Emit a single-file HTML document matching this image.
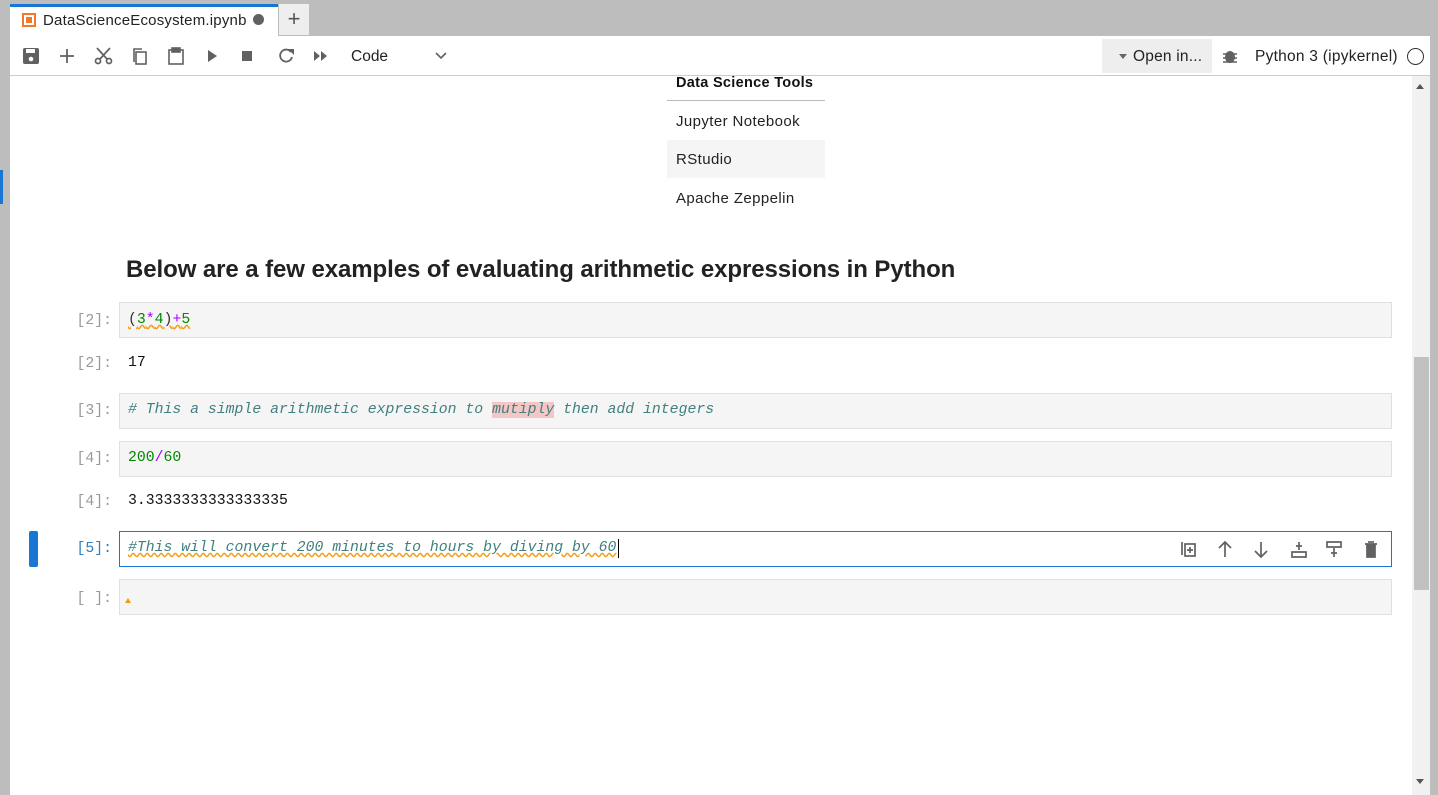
<!DOCTYPE html>
<html><head><style>
*{margin:0;padding:0;box-sizing:border-box}
body{width:1438px;height:795px;background:#bdbdbd;position:relative;overflow:hidden;font-family:"Liberation Sans",sans-serif}
.abs{position:absolute}
.mono{font-family:"Liberation Mono","DejaVu Sans Mono",monospace;font-size:14.8px}
.prompt{position:absolute;left:40px;width:72px;text-align:right;color:#999}
.cell{position:absolute;left:119px;width:1273px;height:36px;background:#f5f5f5;border:1px solid #e0e0e0}
.txt{position:absolute;left:128px;white-space:pre}
.tt{font-size:15px;letter-spacing:0.4px;color:#222}
</style></head><body>
<div class="abs" style="left:10px;top:4px;width:268px;height:32px;background:#fff;border-top:3px solid #1976d2"></div>
<div class="abs" style="left:22px;top:13px;width:14px;height:14px;border:2px solid #f37726;background:#fff"><div style="margin:2px;width:6px;height:6px;background:#f37726"></div></div>
<div class="abs" style="left:43px;top:12px;font-size:15px;letter-spacing:0.2px;color:#222">DataScienceEcosystem.ipynb</div>
<div class="abs" style="left:253px;top:14px;width:11px;height:11px;border-radius:50%;background:#616161"></div>
<div class="abs" style="left:279px;top:4px;width:30px;height:31px;background:#eee;font-size:22px;color:#555;text-align:center;line-height:29px">+</div>
<div class="abs" style="left:10px;top:36px;width:1420px;height:759px;background:#fff"></div>
<div class="abs" style="left:10px;top:75px;width:1420px;height:1px;background:#ccc"></div>
<svg class="abs" style="left:10px;top:36px" width="450" height="40" fill="#616161">
<rect x="13" y="12" width="16" height="16" rx="2"/><rect x="16" y="13" width="9" height="4" fill="#fff"/><circle cx="21" cy="23" r="2.3" fill="#fff"/>
<path d="M57 13v14M50 20h14" stroke="#616161" stroke-width="1.8"/>
<g stroke="#616161" stroke-width="1.7" fill="none"><circle cx="88" cy="25" r="2.5"/><circle cx="99" cy="25" r="2.5"/><path d="M90 23L100 12M97 23L87 12"/></g>
<g stroke="#616161" stroke-width="1.6" fill="none"><path d="M124 26V13h8"/><rect x="126" y="16" width="10" height="12"/></g>
<g stroke="#616161" stroke-width="1.6" fill="none"><rect x="159" y="14" width="14" height="14"/><rect x="162" y="12" width="8" height="4" fill="#616161"/></g>
<path d="M198 14v12l9-6z"/>
<rect x="232" y="15" width="10" height="10"/>
<path d="M281 16a6 6 0 1 0 1 5" stroke="#616161" stroke-width="1.8" fill="none"/><path d="M278 13h6v6z"/>
<path d="M304 15v10l6-5zM311 15v10l6-5z"/>
<path d="M426 17l5 5 5-5" stroke="#616161" stroke-width="1.6" fill="none"/>
</svg>
<div class="abs" style="left:351px;top:48px;font-size:15.5px;color:#222">Code</div>
<div class="abs" style="left:1102px;top:39px;width:110px;height:34px;background:#eee"></div>
<div class="abs" style="left:1119px;top:54px;width:0;height:0;border-left:4px solid transparent;border-right:4px solid transparent;border-top:5px solid #666"></div>
<div class="abs" style="left:1133px;top:48px;font-size:15.5px;letter-spacing:0.2px;color:#222">Open in...</div>
<svg class="abs" style="left:1220px;top:46px" width="20" height="20" fill="#616161"><ellipse cx="10" cy="11" rx="5" ry="6"/><path d="M3 8h14M3 12h14M3 16h14" stroke="#616161" stroke-width="1.5"/></svg>
<div class="abs" style="left:1255px;top:48px;font-size:15.5px;letter-spacing:0.25px;color:#222">Python 3 (ipykernel)</div>
<div class="abs" style="left:1407px;top:48px;width:17px;height:17px;border:1.6px solid #333;border-radius:50%"></div>
<div class="abs" style="left:1412px;top:76px;width:18px;height:719px;background:#f1f1f1"></div>
<div class="abs" style="left:1414px;top:357px;width:15px;height:233px;background:#c1c1c1"></div>
<div class="abs" style="left:1416px;top:84px;border-left:4px solid transparent;border-right:4px solid transparent;border-bottom:5px solid #555"></div>
<div class="abs" style="left:1416px;top:779px;border-left:4px solid transparent;border-right:4px solid transparent;border-top:5px solid #555"></div>
<div class="abs" style="left:0;top:170px;width:3px;height:34px;background:#1976d2"></div>
<div class="abs" style="left:676px;top:75px;font-size:14.5px;font-weight:bold;letter-spacing:0.3px;color:#111">Data Science Tools</div>
<div class="abs" style="left:667px;top:100px;width:158px;height:1px;background:#bbb"></div>
<div class="abs tt" style="left:676px;top:113px">Jupyter Notebook</div>
<div class="abs" style="left:667px;top:140px;width:158px;height:38px;background:#f5f5f5"></div>
<div class="abs tt" style="left:676px;top:151px">RStudio</div>
<div class="abs tt" style="left:676px;top:190px">Apache Zeppelin</div>
<div class="abs" style="left:126px;top:256px;font-size:24px;font-weight:bold;letter-spacing:-0.08px;color:#222">Below are a few examples of evaluating arithmetic expressions in Python</div>
<div class="cell" style="top:302px"></div>
<div class="prompt mono" style="top:313px">[2]:</div>
<div class="txt mono" style="top:312px;text-decoration:underline wavy #f39c12"><span style="color:#333">(</span><span style="color:#080">3</span><span style="color:#a0f">*</span><span style="color:#080">4</span><span style="color:#333">)</span><span style="color:#a0f">+</span><span style="color:#080">5</span></div>
<div class="prompt mono" style="top:356px">[2]:</div>
<div class="txt mono" style="top:355px;color:#111">17</div>
<div class="cell" style="top:393px"></div>
<div class="prompt mono" style="top:403px">[3]:</div>
<div class="txt mono" style="top:402px;color:#408080;font-style:italic"># This a simple arithmetic expression to <span style="background:#f5c6c6">mutiply</span> then add integers</div>
<div class="cell" style="top:441px"></div>
<div class="prompt mono" style="top:451px">[4]:</div>
<div class="txt mono" style="top:450px;color:#080">200<span style="color:#a0f">/</span>60</div>
<div class="prompt mono" style="top:494px">[4]:</div>
<div class="txt mono" style="top:493px;color:#111">3.3333333333333335</div>
<div class="abs" style="left:29px;top:531px;width:9px;height:36px;background:#1976d2;border-radius:2px"></div>
<div class="cell" style="top:531px;background:#fff;border:1px solid #1976d2"></div>
<div class="prompt mono" style="top:541px;color:#307fc1">[5]:</div>
<div class="txt mono" style="top:540px;color:#408080;font-style:italic;text-decoration:underline wavy #f39c12">#This will convert 200 minutes to hours by diving by 60</div>
<div class="abs" style="left:618px;top:539px;width:1px;height:19px;background:#000"></div>
<svg class="abs" style="left:1178px;top:538px" width="205" height="22" fill="none" stroke="#616161" stroke-width="1.7">
<path d="M4 4v13"/><rect x="7" y="6" width="10" height="12"/><path d="M12 9v6M9 12h6"/>
<path d="M47 19V4M41 10l6-6 6 6"/>
<path d="M83 4v15M77 13l6 6 6-6"/>
<path d="M114 14h14v5h-14zM121 4v8M118 8h6"/>
<path d="M149 4h14v5h-14zM156 10v9M153 15h6"/>
<path d="M187 6h12M189 7h8v12h-8z" fill="#616161"/><path d="M190 4h6"/>
</svg>
<div class="cell" style="top:579px"></div>
<div class="prompt mono" style="top:591px">[ ]:</div>
<div class="abs" style="left:125px;top:598px;border-left:3px solid transparent;border-right:3px solid transparent;border-bottom:5px solid #f39c12"></div>
</body></html>
